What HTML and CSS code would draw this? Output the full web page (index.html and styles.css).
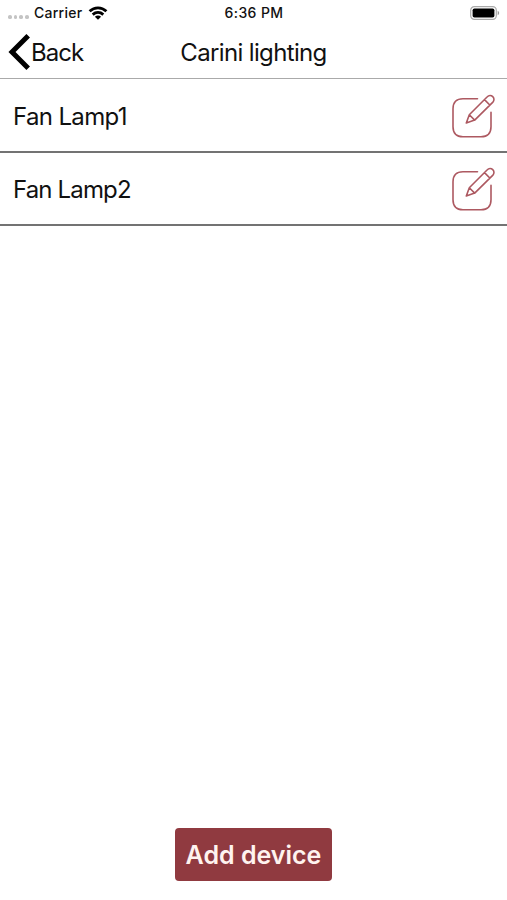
FILE: index.html
```html
<!DOCTYPE html>
<html lang="en">
<head>
<meta charset="utf-8">
<title>Carini lighting</title>
<link rel="stylesheet" href="styles.css">
</head>
<body>
<div class="status">
  <div class="carrier">
    <span class="dots"><i></i><i></i><i></i><i></i></span>
    <span class="carrier-name">Carrier</span>
    <svg class="wifi" width="20" height="14" viewBox="0 0 20 14" fill="none" stroke="#000" stroke-width="2.8">
      <path d="M1.6 5.3C6.5.6 13.5.6 18.4 5.3"/>
      <path d="M4.7 8.6c3.2-2.8 7.4-2.8 10.6 0"/>
      <path d="M10 13.8 6.9 10.7c1.8-1.5 4.4-1.5 6.2 0z" fill="#000" stroke="none"/>
    </svg>
  </div>
  <span class="time">6:36 PM</span>
  <svg class="battery" width="30" height="14" viewBox="0 0 30 14">
    <rect x=".7" y=".7" width="25.6" height="12.6" rx="3.6" fill="#fff" stroke="#aaa" stroke-width="1.2"/>
    <rect x="2.6" y="2.5" width="21.8" height="9" rx="1.8"/>
    <path d="M27.7 4.8c2 .8 2 3.6 0 4.4z" fill="#999"/>
  </svg>
</div>
<header class="nav">
  <a class="back">
    <svg width="23" height="36" viewBox="0 0 23 36" fill="none" stroke="#000" stroke-width="5"><path d="M20.2 1.8 4 18l16.2 16.2"/></svg>
    <span class="back-label">Back</span>
  </a>
  <h1>Carini lighting</h1>
</header>
<ul class="devices">
  <li>
    <span class="name">Fan Lamp1</span>
    <svg class="edit" width="46" height="46" viewBox="0 0 46 46"><path d="M27.5 5.8H13Q3 5.8 3 15.8V33.7Q3 43.7 13 43.7H31Q41 43.7 41 33.7V19.3"/><path d="M16.3 30 19.3 21.8 37.3 3.8A3.6 3.6 0 0 1 42.9 9.1L24.7 27.1ZM19.3 21.8 24.7 27.1M34.5 6.6 39.8 12"/></svg>
  </li>
  <li>
    <span class="name name-wide">Fan Lamp2</span>
    <svg class="edit" width="46" height="46" viewBox="0 0 46 46"><path d="M27.5 5.8H13Q3 5.8 3 15.8V33.7Q3 43.7 13 43.7H31Q41 43.7 41 33.7V19.3"/><path d="M16.3 30 19.3 21.8 37.3 3.8A3.6 3.6 0 0 1 42.9 9.1L24.7 27.1ZM19.3 21.8 24.7 27.1M34.5 6.6 39.8 12"/></svg>
  </li>
</ul>
<footer class="actions"><button class="add">Add device</button></footer>
</body>
</html>
```
FILE: styles.css
```css
* { box-sizing: border-box; }
body {
  margin: 0;
  height: 900px;
  display: flex;
  flex-direction: column;
  background: #fff;
  color: #111;
  font-family: Inter, "Liberation Sans", sans-serif;
}
.status {
  height: 26px;
  display: grid;
  grid-template-columns: 1fr auto 1fr;
  align-items: center;
  padding: 0 7px 0 8px;
  font-size: 14px;
  line-height: 26px;
  font-weight: 500;
}
.carrier { display: flex; align-items: center; }
.dots { display: flex; gap: 2px; width: 26px; padding-top: 8px; }
.dots i { width: 3.7px; height: 3.7px; border-radius: 50%; background: #c4c4c4; }
.carrier-name { width: 54px; letter-spacing: 0.25px; }
.time { letter-spacing: 0.4px; }
.battery { justify-self: end; }
.nav {
  height: 53px;
  display: grid;
  grid-template-columns: 1fr auto 1fr;
  align-items: center;
  border-bottom: 1px solid #aaa;
  font-size: 24px;
}
.back { display: flex; align-items: center; padding-left: 8px; }
.back-label { letter-spacing: -0.95px; }
h1 { margin: 0; font-size: 24px; font-weight: 400; letter-spacing: -0.65px; }
.devices { margin: 0; padding: 0; list-style: none; flex: 1; }
.devices li {
  height: 73.5px;
  display: flex;
  align-items: center;
  justify-content: space-between;
  padding: 2px 11px 0 13px;
  border-bottom: 2px solid #737373;
}
.name { padding-top: 1px; font-size: 24px; letter-spacing: -0.65px; }
.name-wide { letter-spacing: -0.85px; }
.edit { fill: none; stroke: #ad5961; stroke-width: 1.6; stroke-linejoin: round; stroke-linecap: round; }
.actions { display: flex; justify-content: center; padding-bottom: 19px; }
.add {
  width: 157px;
  height: 53px;
  padding: 0;
  border: 0;
  border-radius: 4px;
  background: #903a40;
  color: #fff3ef;
  font: 600 25px Inter, sans-serif;
}
```
